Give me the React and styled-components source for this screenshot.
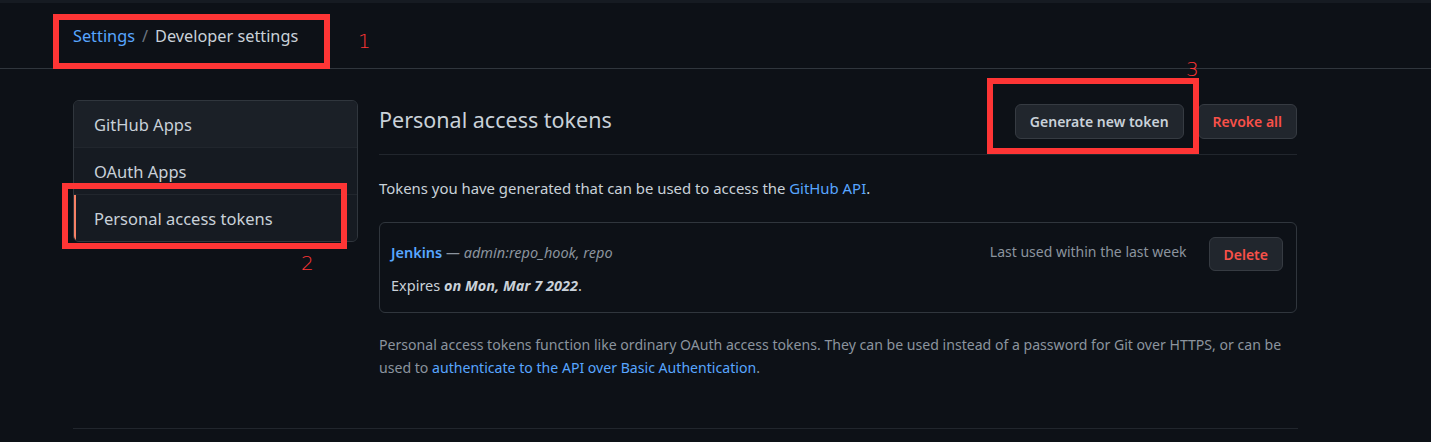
import React from 'react'
import styled, { createGlobalStyle } from 'styled-components'

const GlobalStyle = createGlobalStyle`
	html, body {
		margin: 0;
		padding: 0;
		background: #0d1117;
	}
	body {
		font-family: 'Noto Sans', 'Open Sans', sans-serif;
		color: #c9d1d9;
	}
`

const menu = [
	{ label: 'GitHub Apps', tone: 'hover' },
	{ label: 'OAuth Apps' },
	{ label: 'Personal access tokens', selected: true },
]

const App = () => {
	return (
		<Page>
			<GlobalStyle />
			<Header>
				<Crumbs>
					<a href="#settings">Settings</a>
					<Sep>/</Sep>
					<span>Developer settings</span>
				</Crumbs>
			</Header>

			<Layout>
				<Menu>
					{menu.map((item) => (
						<MenuItem key={item.label} $hover={item.tone === 'hover'} $selected={item.selected}>
							{item.label}
						</MenuItem>
					))}
				</Menu>

				<Main>
					<TitleRow>
						<Title>Personal access tokens</Title>
						<Actions>
							<Button>Generate new token</Button>
							<Button $danger>Revoke all</Button>
						</Actions>
					</TitleRow>

					<Lead>
						Tokens you have generated that can be used to access the{' '}
						<a href="#api">GitHub API</a>.
					</Lead>

					<TokenCard>
						<TokenInfo>
							<TokenName>
								<strong>Jenkins</strong> <em>— admin:repo_hook, repo</em>
							</TokenName>
							<Expires>
								Expires <b><i>on Mon, Mar 7 2022</i></b>.
							</Expires>
						</TokenInfo>
						<LastUsed>Last used within the last week</LastUsed>
						<Button $danger $small>Delete</Button>
					</TokenCard>

					<Note>
						Personal access tokens function like ordinary OAuth access tokens. They can be used
						instead of a password for Git over HTTPS, or can be used to{' '}
						<a href="#auth">authenticate to the API over Basic Authentication</a>.
					</Note>
				</Main>
			</Layout>
			<Bottom />

			{/* screenshot annotations */}
			<Mark style={{ left: 53, top: 14, width: 277, height: 55 }} />
			<MarkNum style={{ left: 358, top: 31 }}>1</MarkNum>
			<Mark style={{ left: 62, top: 183, width: 285, height: 66 }} />
			<MarkNum style={{ left: 301, top: 253 }}>2</MarkNum>
			<Mark style={{ left: 987, top: 78, width: 212, height: 76 }} />
			<MarkNum style={{ left: 1186, top: 59 }}>3</MarkNum>
		</Page>
	)
}

export default App

const Page = styled.div`
	position: relative;
	min-height: 442px;
	overflow: hidden;
`

const Header = styled.header`
	height: 69px;
	box-sizing: border-box;
	border-top: 3px solid #161b22;
	border-bottom: 1px solid #30363d;
	display: flex;
	align-items: center;
	padding-left: 73px;
`

const Crumbs = styled.nav`
	font-size: 16.3px;
	color: #c9d1d9;
	display: flex;
	align-items: center;

	a {
		color: #58a6ff;
		text-decoration: none;
	}
`

const Sep = styled.span`
	color: #6e7681;
	margin: 0 7px;
`

const Layout = styled.div`
	display: grid;
	grid-template-columns: 285px 918px;
	gap: 21px;
	padding: 31px 0 0 73px;
`

const Menu = styled.div`
	align-self: start;
	border: 1px solid #30363d;
	border-radius: 6px;
	overflow: hidden;
	background: #161b22;
`

const MenuItem = styled.div`
	height: 46px;
	display: flex;
	align-items: center;
	padding-left: 20px;
	font-size: 16.5px;
	color: #c9d1d9;
	background: ${(p) => (p.$hover ? '#1b2027' : '#161b22')};
	border-top: 1px solid #21262d;
	box-shadow: ${(p) => (p.$selected ? 'inset 2px 0 0 #f78166' : 'none')};

	&:first-child {
		border-top: none;
	}
`

const Main = styled.main`
	display: flex;
	flex-direction: column;
`

const TitleRow = styled.div`
	display: flex;
	align-items: center;
	justify-content: space-between;
	padding: 4px 0 15px;
	border-bottom: 1px solid #21262d;
`

const Title = styled.h2`
	margin: 0 0 5px;
	font-size: 21.5px;
	font-weight: 400;
	color: #c9d1d9;
`

const Actions = styled.div`
	display: flex;
	gap: 14px;
`

const Button = styled.button`
	font-family: inherit;
	height: ${(p) => (p.$small ? '34px' : '35px')};
	padding: 0 14px;
	font-size: 14px;
	font-weight: 600;
	border-radius: 6px;
	border: 1px solid #363b42;
	background: #21262d;
	color: ${(p) => (p.$danger ? '#f85149' : '#c9d1d9')};
	cursor: pointer;
`

const Lead = styled.p`
	margin: 21px 0 22px;
	font-size: 14.9px;
	line-height: 24px;

	a {
		color: #58a6ff;
		text-decoration: none;
	}
`

const TokenCard = styled.div`
	display: flex;
	align-items: flex-start;
	border: 1px solid #30363d;
	border-radius: 6px;
	padding: 14px 13px 14px 11px;
	height: 91px;
	box-sizing: border-box;
`

const TokenInfo = styled.div`
	flex: 1;
	display: flex;
	flex-direction: column;
	gap: 13px;
	padding-top: 5px;
	font-size: 14.5px;
	line-height: 20px;
`

const TokenName = styled.div`
	strong {
		color: #58a6ff;
		font-weight: 600;
	}
	em {
		color: #8b949e;
	}
`

const Expires = styled.div`
	color: #c9d1d9;
`

const LastUsed = styled.div`
	font-size: 14px;
	line-height: 20px;
	color: #8b949e;
	padding-top: 5px;
	margin-right: 22px;
`

const Note = styled.p`
	margin: 20px 0 0;
	font-size: 14.1px;
	line-height: 23px;
	color: #8b949e;

	a {
		color: #58a6ff;
		text-decoration: none;
	}
`

const Bottom = styled.div`
	margin: 49px 0 0 73px;
	width: 1225px;
	border-top: 1px solid #21262d;
`

const Mark = styled.div`
	position: absolute;
	border: 6px solid #fe3535;
	box-sizing: border-box;
	pointer-events: none;
`

const MarkNum = styled.div`
	position: absolute;
	color: #fe3535;
	font-size: 20px;
	line-height: 20px;
	font-family: 'DejaVu Sans', sans-serif;
	font-weight: 300;
`
